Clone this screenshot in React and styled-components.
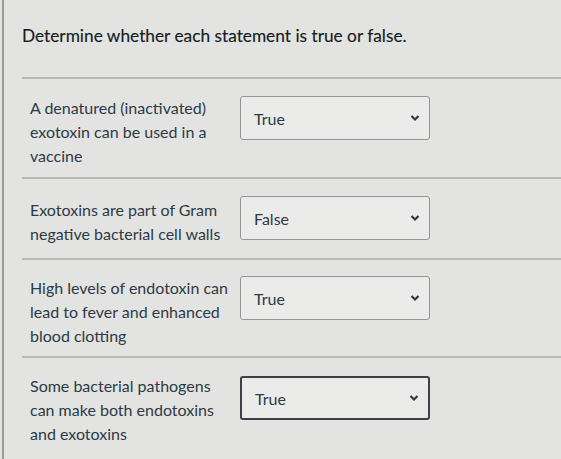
import React from "react"
import styled, { createGlobalStyle } from "styled-components"

const GlobalStyle = createGlobalStyle`
  html, body {
    margin: 0;
    padding: 0;
    background: #e3e3e2;
  }
  body {
    font-family: Lato, "Open Sans", sans-serif;
    color: #2d3b45;
  }
`

const Page = styled.div`
  min-height: 459px;
  border-left: 2px solid #9a9a9a;
  margin-left: 2px;
  padding-left: 18px;
  box-sizing: border-box;
`

const Title = styled.h1`
  margin: 0;
  padding: 23px 0 28px;
  font-size: 17.3px;
  font-weight: 400;
  line-height: 26px;
  color: #151d24;
  -webkit-text-stroke: 0.15px #151d24;
`

const Row = styled.div`
  display: grid;
  grid-template-columns: 202px 190px;
  column-gap: 8px;
  align-items: start;
  border-top: 2px solid #b9b9b9;
  padding: ${({ $top }) => $top}px 0 ${({ $bottom }) => $bottom}px 8px;
`

const Statement = styled.div`
  font-size: 16px;
  line-height: 24px;
  color: #2d3b45;
`

const Select = styled.div`
  display: flex;
  align-items: center;
  justify-content: space-between;
  height: ${({ $focused }) => ($focused ? 40 : 42)}px;
  padding: 0 9px 0 13px;
  border: ${({ $focused }) => ($focused ? "2px solid #3b4247" : "1px solid #8f9599")};
  border-radius: 3px;
  background: #ebebea;
  font-size: 16px;
  color: #2d3b45;
  margin-top: ${({ $offset }) => $offset}px;
`

const Chevron = () => (
  <svg width="10" height="8" viewBox="0 0 10 8">
    <path d="M1.5 2 L5 5.5 L8.5 2" fill="none" stroke="#2d3b45" strokeWidth="2.2" />
  </svg>
)

const items = [
  { text: "A denatured (inactivated) exotoxin can be used in a vaccine", value: "True", top: 17, bottom: 9, offset: 0 },
  { text: "Exotoxins are part of Gram negative bacterial cell walls", value: "False", top: 19, bottom: 12, offset: -2 },
  { text: "High levels of endotoxin can lead to fever and enhanced blood clotting", value: "True", top: 16, bottom: 8, offset: 0 },
  { text: "Some bacterial pathogens can make both endotoxins and exotoxins", value: "True", top: 16, bottom: 14, offset: 2, focused: true },
]

export default function App() {
  return (
    <>
      <GlobalStyle />
      <Page>
        <Title>Determine whether each statement is true or false.</Title>
        {items.map((item) => (
          <Row key={item.text} $top={item.top} $bottom={item.bottom}>
            <Statement>{item.text}</Statement>
            <Select $focused={item.focused} $offset={item.offset}>
              <span>{item.value}</span>
              <Chevron />
            </Select>
          </Row>
        ))}
      </Page>
    </>
  )
}
